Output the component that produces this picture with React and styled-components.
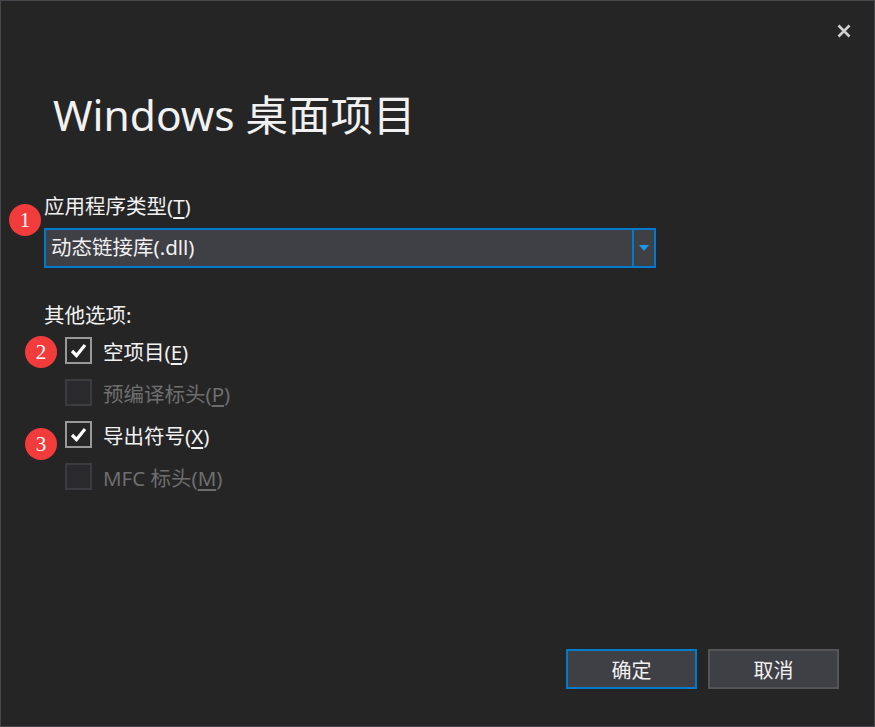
import React from "react";
import styled, { createGlobalStyle } from "styled-components";

const GlobalStyle = createGlobalStyle`
  html, body {
    margin: 0;
    padding: 0;
    background: #252526;
  }
  * {
    box-sizing: border-box;
  }
`;

const FONT = `"Segoe UI", "Noto Sans", "Noto Sans CJK SC", sans-serif`;

const options = [
  { id: "empty", label: "空项目", key: "E", checked: true, badge: 2, badgeTop: -1 },
  { id: "pch", label: "预编译标头", key: "P", disabled: true },
  { id: "export", label: "导出符号", key: "X", checked: true, badge: 3, badgeTop: 7 },
  { id: "mfc", label: "MFC 标头", key: "M", disabled: true },
];

const Dialog = styled.div`
  width: 875px;
  height: 727px;
  border: 1px solid #46464b;
  background: #252526;
  display: flex;
  flex-direction: column;
  font-family: ${FONT};
  color: #f1f1f1;
`;

const Header = styled.div`
  height: 86px;
  display: flex;
  justify-content: flex-end;
  align-items: flex-start;
  padding: 20px 20px 0 0;
`;

const CloseButton = styled.button`
  width: 20px;
  height: 20px;
  padding: 0;
  border: none;
  background: transparent;
  display: flex;
  align-items: center;
  justify-content: center;
`;

const Title = styled.h1`
  margin: 0 0 0 52px;
  font-size: 42.5px;
  font-weight: 400;
  line-height: 56px;
  color: #f1f1f1;
`;

const Content = styled.div`
  padding: 50px 0 0 43px;
`;

const Field = styled.div`
  position: relative;
`;

const Label = styled.div`
  font-size: 20.5px;
  line-height: 26px;
  color: #f1f1f1;
  margin-bottom: ${(p) => p.$gap || 0}px;
`;

const Underline = styled.span`
  text-decoration: underline;
  text-underline-offset: 3px;
`;

const Badge = styled.span`
  position: absolute;
  left: ${(p) => p.$left}px;
  top: ${(p) => p.$top}px;
  width: 32px;
  height: 32px;
  border-radius: 50%;
  background: #f23b3b;
  color: #fff;
  font-family: "Liberation Serif", "DejaVu Serif", serif;
  font-size: 21px;
  line-height: 32px;
  text-align: center;
`;

const Select = styled.div`
  width: 612px;
  height: 40px;
  border: 2px solid #007acc;
  background: #3f3f46;
  display: flex;
`;

const SelectValue = styled.div`
  flex: 1;
  padding-left: 5px;
  font-size: 20.5px;
  line-height: 35px;
  color: #f1f1f1;
`;

const SelectArrow = styled.div`
  width: 22px;
  border-left: 2px solid #007acc;
  display: flex;
  align-items: center;
  justify-content: center;
`;

const Section = styled.div`
  margin-top: 34px;
`;

const OptionList = styled.div`
  display: flex;
  flex-direction: column;
  gap: 15px;
  padding-left: 21px;
  margin-top: 9px;
`;

const OptionRow = styled.label`
  position: relative;
  display: flex;
  align-items: center;
  gap: 11px;
  height: 27px;
  font-size: 20.5px;
  color: ${(p) => (p.$disabled ? "#6e6e6e" : "#f1f1f1")};
`;

const Box = styled.span`
  width: 27px;
  height: 27px;
  border: 2px solid ${(p) => (p.$disabled ? "#3c3c40" : "#999999")};
  background: ${(p) => (p.$disabled ? "#2a2a2c" : "#252526")};
  display: flex;
  align-items: center;
  justify-content: center;
`;

const Footer = styled.div`
  margin-top: auto;
  display: flex;
  justify-content: flex-end;
  gap: 11px;
  padding: 0 35px 37px 0;
`;

const Button = styled.button`
  width: 131px;
  height: 40px;
  background: #3f3f46;
  border: 2px solid ${(p) => (p.$primary ? "#007acc" : "#555558")};
  color: #f1f1f1;
  font-family: ${FONT};
  font-size: 20px;
  padding: 0;
`;

const Check = () => (
  <svg width="17" height="15" viewBox="0 0 17 15">
    <path d="M2 8 L6.5 12.5 L15 2" fill="none" stroke="#ffffff" strokeWidth="3.2" />
  </svg>
);

const App = () => {
  return (
    <>
      <GlobalStyle />
      <Dialog>
        <Header>
          <CloseButton aria-label="close">
            <svg width="14" height="14" viewBox="0 0 14 14">
              <path d="M1.5 1.5 L12.5 12.5 M12.5 1.5 L1.5 12.5" stroke="#d0d0d0" strokeWidth="2.6" />
            </svg>
          </CloseButton>
        </Header>
        <Title>Windows 桌面项目</Title>
        <Content>
          <Field>
            <Badge $left={-35} $top={11}>1</Badge>
            <Label $gap={9}>
              应用程序类型(<Underline>T</Underline>)
            </Label>
            <Select>
              <SelectValue>动态链接库(.dll)</SelectValue>
              <SelectArrow>
                <svg width="10" height="6" viewBox="0 0 10 6">
                  <path d="M0 0 H10 L5 6 Z" fill="#1c97ea" />
                </svg>
              </SelectArrow>
            </Select>
          </Field>
          <Section>
            <Label>其他选项:</Label>
            <OptionList>
              {options.map((o) => (
                <OptionRow key={o.id} $disabled={o.disabled}>
                  {o.badge && (
                    <Badge $left={-40} $top={o.badgeTop}>
                      {o.badge}
                    </Badge>
                  )}
                  <Box $disabled={o.disabled}>{o.checked && <Check />}</Box>
                  <span>
                    {o.label}(<Underline>{o.key}</Underline>)
                  </span>
                </OptionRow>
              ))}
            </OptionList>
          </Section>
        </Content>
        <Footer>
          <Button $primary>确定</Button>
          <Button>取消</Button>
        </Footer>
      </Dialog>
    </>
  );
};

export default App;
